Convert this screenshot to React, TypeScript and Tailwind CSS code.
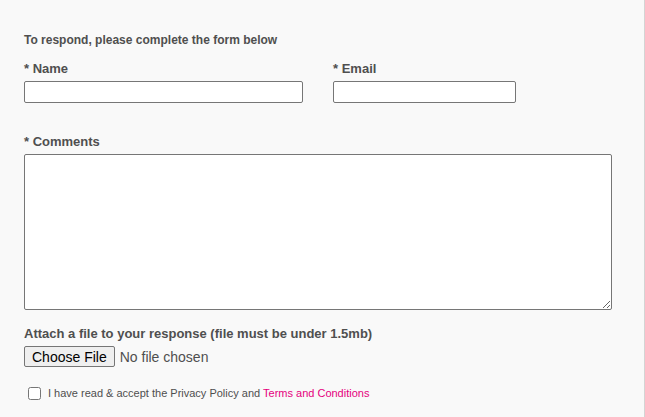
import React from 'react';

const font = { fontFamily: '"Liberation Sans", Arial, sans-serif' };

function Field({ label, className }: { label: string; className: string }) {
    return (
        <label className="flex flex-col">
            <span className="text-[13px] font-bold leading-[15px] text-[#4f4f4f] mb-[5px]">* {label}</span>
            <input type="text" className={`h-[22px] bg-white border border-[#767676] rounded-[2px] ${className}`} />
        </label>
    );
}

export default function App() {
    return (
        <div className="min-h-[417px] bg-[#f9f9f9] border-r border-[#d4d4d4] w-[645px]" style={font}>
            <div className="pl-6 pt-[33px]">
                <p className="text-[12px] font-bold leading-[14px] text-[#4f4f4f] mb-[14px]">
                    To respond, please complete the form below
                </p>

                <div className="flex gap-[30px]">
                    <Field label="Name" className="w-[279px]" />
                    <Field label="Email" className="w-[183px]" />
                </div>

                <label className="flex flex-col mt-[31px]">
                    <span className="text-[13px] font-bold leading-[15px] text-[#4f4f4f] mb-[5px]">* Comments</span>
                    <textarea className="w-[588px] h-[156px] bg-white border border-[#767676] rounded-[2px]" />
                </label>

                <label className="flex flex-col mt-[16px]">
                    <span className="text-[13px] font-bold leading-[15px] text-[#4f4f4f] mb-[5px]">
                        Attach a file to your response (file must be under 1.5mb)
                    </span>
                    <input
                        type="file"
                        className="text-[14px] leading-[16px] text-[#4f4f4f] file:text-[14px] file:text-black file:bg-[#efefef] file:border file:border-[#767676] file:rounded-[2px] file:px-[7px] file:py-[1px] file:mr-[5px] file:h-[21px]"
                    />
                </label>

                <label className="flex items-center mt-[18px] pl-1 text-[11px] text-[#4f4f4f]">
                    <input type="checkbox" className="w-[13px] h-[13px] m-0" />
                    <span className="ml-[7px]">
                        I have read &amp; accept the Privacy Policy and <a className="text-[#e5007d]">Terms and Conditions</a>
                    </span>
                </label>
            </div>
        </div>
    );
}
